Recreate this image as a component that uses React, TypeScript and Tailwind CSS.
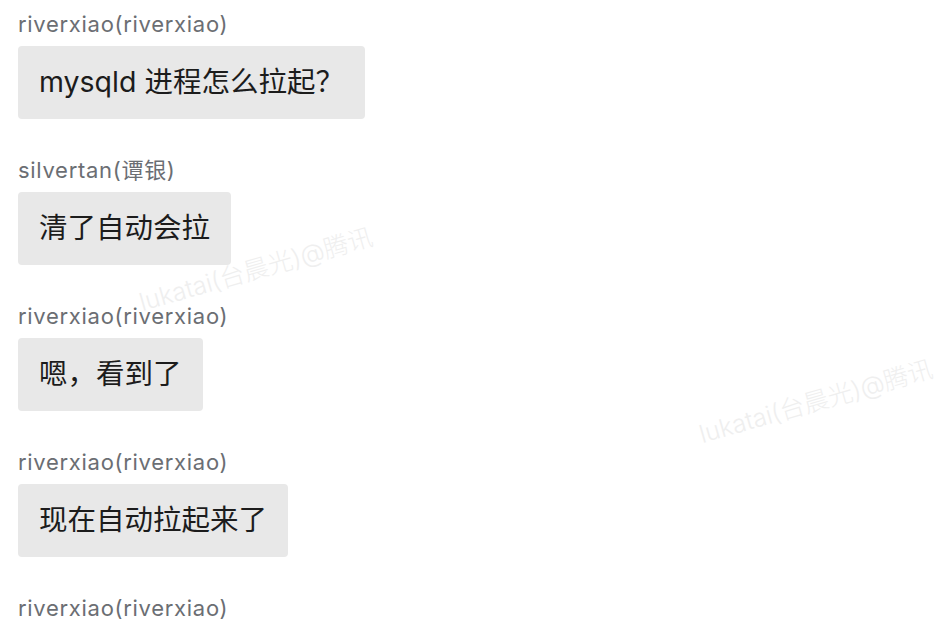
import React from 'react';

const messages = [
  { name: 'riverxiao(riverxiao)', text: 'mysqld 进程怎么拉起？' },
  { name: 'silvertan(谭银)', text: '清了自动会拉' },
  { name: 'riverxiao(riverxiao)', text: '嗯，看到了' },
  { name: 'riverxiao(riverxiao)', text: '现在自动拉起来了' },
  { name: 'riverxiao(riverxiao)', text: '' },
];

const Watermark: React.FC<{ className: string }> = ({ className }) => (
  <div
    className={`absolute pointer-events-none select-none whitespace-nowrap text-[25px] font-light text-[#efefef] -translate-x-1/2 -translate-y-1/2 -rotate-[16deg] ${className}`}
  >
    lukatai(台晨光)@腾讯
  </div>
);

const App: React.FC = () => {
  return (
    <div
      className="relative w-[938px] h-[630px] overflow-hidden bg-white"
      style={{ fontFamily: 'Inter, "Noto Sans CJK SC", sans-serif' }}
    >
      {/* watermarks, under the chat */}
      <Watermark className="left-[256px] top-[270px]" />
      <Watermark className="left-[816px] top-[402px]" />

      <div className="relative flex flex-col pl-[18px] pt-[10px]">
        {messages.map((m, i) => (
          <div key={i} className="flex flex-col items-start h-[146px] shrink-0">
            <div className="h-[28px] leading-[28px] text-[22px] tracking-[0.7px] text-[#6b6e73]">{m.name}</div>
            {m.text && (
              <div className="mt-[8px] h-[73px] flex items-center px-[21px] rounded-[4px] bg-[#e8e8e8] text-[28.5px] text-[#1c1c1c]">
                {m.text}
              </div>
            )}
          </div>
        ))}
      </div>
    </div>
  );
};

export default App;
